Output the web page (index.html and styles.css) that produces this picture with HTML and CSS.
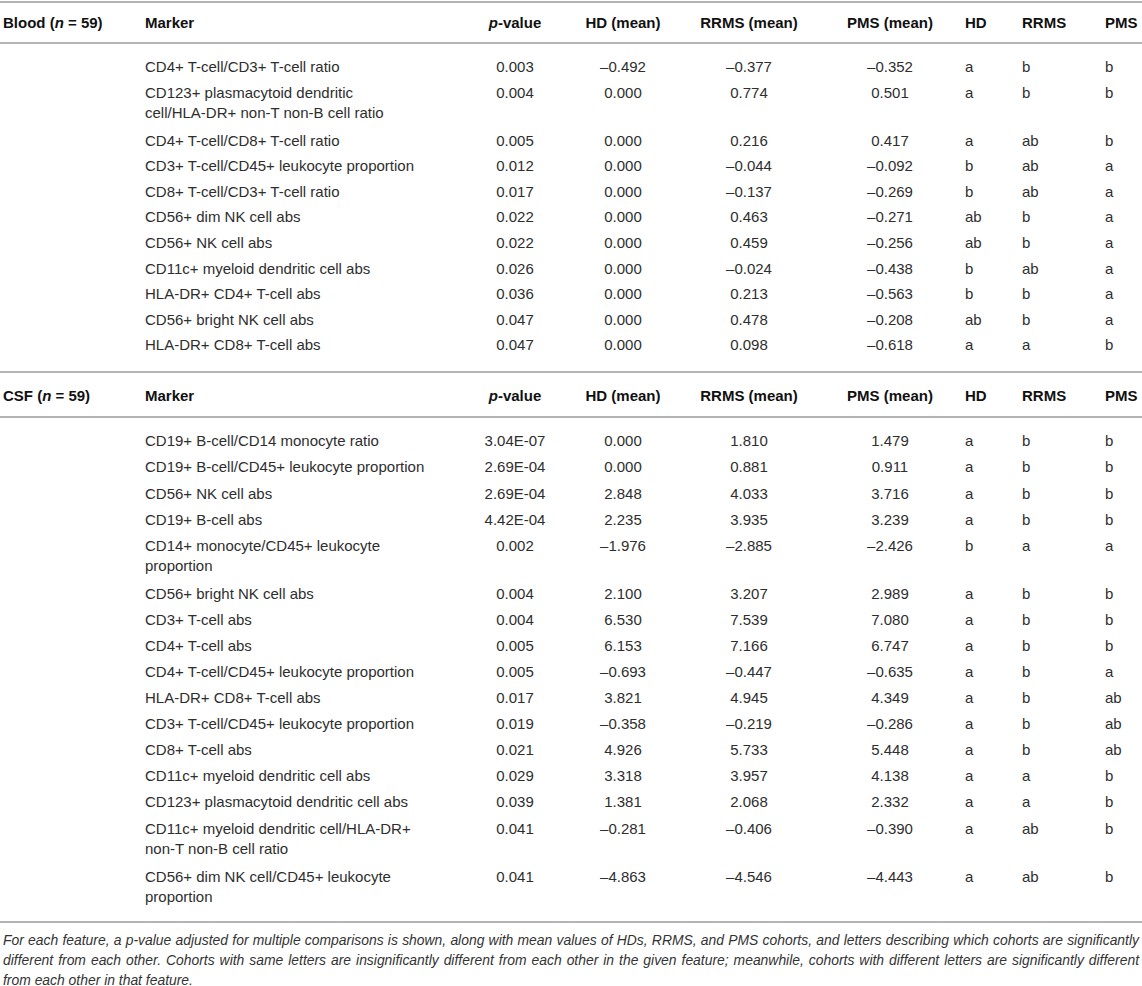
FILE: index.html
```html
<!DOCTYPE html>
<html>
<head>
    <meta charset="UTF-8">
    <title>Markers by cohort</title>
    <link rel="stylesheet" href="styles.css">
</head>
<body>
    <table class="markers">
        <colgroup>
            <col class="c-group">
            <col class="c-marker">
            <col class="c-p">
            <col class="c-hd">
            <col class="c-rrms">
            <col class="c-pms">
            <col class="c-l1">
            <col class="c-l2">
            <col class="c-l3">
        </colgroup>
        <tbody class="blood">
            <tr class="head">
                <td class="group">Blood (<i>n</i> = 59)</td>
                <td class="name">Marker</td>
                <td class="num"><i>p</i>-value</td>
                <td class="num">HD (mean)</td>
                <td class="num">RRMS (mean)</td>
                <td class="num">PMS (mean)</td>
                <td class="let">HD</td>
                <td class="let">RRMS</td>
                <td class="let">PMS</td>
            </tr>
            <tr class="first"><td></td><td class="name">CD4+ T-cell/CD3+ T-cell ratio</td><td class="num">0.003</td><td class="num">–0.492</td><td class="num">–0.377</td><td class="num">–0.352</td><td class="let">a</td><td class="let">b</td><td class="let">b</td></tr>
            <tr class="wrap"><td></td><td class="name">CD123+ plasmacytoid dendritic<br>cell/HLA-DR+ non-T non-B cell ratio</td><td class="num">0.004</td><td class="num">0.000</td><td class="num">0.774</td><td class="num">0.501</td><td class="let">a</td><td class="let">b</td><td class="let">b</td></tr>
            <tr><td></td><td class="name">CD4+ T-cell/CD8+ T-cell ratio</td><td class="num">0.005</td><td class="num">0.000</td><td class="num">0.216</td><td class="num">0.417</td><td class="let">a</td><td class="let">ab</td><td class="let">b</td></tr>
            <tr><td></td><td class="name">CD3+ T-cell/CD45+ leukocyte proportion</td><td class="num">0.012</td><td class="num">0.000</td><td class="num">–0.044</td><td class="num">–0.092</td><td class="let">b</td><td class="let">ab</td><td class="let">a</td></tr>
            <tr><td></td><td class="name">CD8+ T-cell/CD3+ T-cell ratio</td><td class="num">0.017</td><td class="num">0.000</td><td class="num">–0.137</td><td class="num">–0.269</td><td class="let">b</td><td class="let">ab</td><td class="let">a</td></tr>
            <tr><td></td><td class="name">CD56+ dim NK cell abs</td><td class="num">0.022</td><td class="num">0.000</td><td class="num">0.463</td><td class="num">–0.271</td><td class="let">ab</td><td class="let">b</td><td class="let">a</td></tr>
            <tr><td></td><td class="name">CD56+ NK cell abs</td><td class="num">0.022</td><td class="num">0.000</td><td class="num">0.459</td><td class="num">–0.256</td><td class="let">ab</td><td class="let">b</td><td class="let">a</td></tr>
            <tr><td></td><td class="name">CD11c+ myeloid dendritic cell abs</td><td class="num">0.026</td><td class="num">0.000</td><td class="num">–0.024</td><td class="num">–0.438</td><td class="let">b</td><td class="let">ab</td><td class="let">a</td></tr>
            <tr><td></td><td class="name">HLA-DR+ CD4+ T-cell abs</td><td class="num">0.036</td><td class="num">0.000</td><td class="num">0.213</td><td class="num">–0.563</td><td class="let">b</td><td class="let">b</td><td class="let">a</td></tr>
            <tr><td></td><td class="name">CD56+ bright NK cell abs</td><td class="num">0.047</td><td class="num">0.000</td><td class="num">0.478</td><td class="num">–0.208</td><td class="let">ab</td><td class="let">b</td><td class="let">a</td></tr>
            <tr class="last"><td></td><td class="name">HLA-DR+ CD8+ T-cell abs</td><td class="num">0.047</td><td class="num">0.000</td><td class="num">0.098</td><td class="num">–0.618</td><td class="let">a</td><td class="let">a</td><td class="let">b</td></tr>
        </tbody>
        <tbody class="csf">
            <tr class="head">
                <td class="group">CSF (<i>n</i> = 59)</td>
                <td class="name">Marker</td>
                <td class="num"><i>p</i>-value</td>
                <td class="num">HD (mean)</td>
                <td class="num">RRMS (mean)</td>
                <td class="num">PMS (mean)</td>
                <td class="let">HD</td>
                <td class="let">RRMS</td>
                <td class="let">PMS</td>
            </tr>
            <tr class="first"><td></td><td class="name">CD19+ B-cell/CD14 monocyte ratio</td><td class="num">3.04E-07</td><td class="num">0.000</td><td class="num">1.810</td><td class="num">1.479</td><td class="let">a</td><td class="let">b</td><td class="let">b</td></tr>
            <tr><td></td><td class="name">CD19+ B-cell/CD45+ leukocyte proportion</td><td class="num">2.69E-04</td><td class="num">0.000</td><td class="num">0.881</td><td class="num">0.911</td><td class="let">a</td><td class="let">b</td><td class="let">b</td></tr>
            <tr><td></td><td class="name">CD56+ NK cell abs</td><td class="num">2.69E-04</td><td class="num">2.848</td><td class="num">4.033</td><td class="num">3.716</td><td class="let">a</td><td class="let">b</td><td class="let">b</td></tr>
            <tr><td></td><td class="name">CD19+ B-cell abs</td><td class="num">4.42E-04</td><td class="num">2.235</td><td class="num">3.935</td><td class="num">3.239</td><td class="let">a</td><td class="let">b</td><td class="let">b</td></tr>
            <tr class="wrap"><td></td><td class="name">CD14+ monocyte/CD45+ leukocyte<br>proportion</td><td class="num">0.002</td><td class="num">–1.976</td><td class="num">–2.885</td><td class="num">–2.426</td><td class="let">b</td><td class="let">a</td><td class="let">a</td></tr>
            <tr><td></td><td class="name">CD56+ bright NK cell abs</td><td class="num">0.004</td><td class="num">2.100</td><td class="num">3.207</td><td class="num">2.989</td><td class="let">a</td><td class="let">b</td><td class="let">b</td></tr>
            <tr><td></td><td class="name">CD3+ T-cell abs</td><td class="num">0.004</td><td class="num">6.530</td><td class="num">7.539</td><td class="num">7.080</td><td class="let">a</td><td class="let">b</td><td class="let">b</td></tr>
            <tr><td></td><td class="name">CD4+ T-cell abs</td><td class="num">0.005</td><td class="num">6.153</td><td class="num">7.166</td><td class="num">6.747</td><td class="let">a</td><td class="let">b</td><td class="let">b</td></tr>
            <tr><td></td><td class="name">CD4+ T-cell/CD45+ leukocyte proportion</td><td class="num">0.005</td><td class="num">–0.693</td><td class="num">–0.447</td><td class="num">–0.635</td><td class="let">a</td><td class="let">b</td><td class="let">a</td></tr>
            <tr><td></td><td class="name">HLA-DR+ CD8+ T-cell abs</td><td class="num">0.017</td><td class="num">3.821</td><td class="num">4.945</td><td class="num">4.349</td><td class="let">a</td><td class="let">b</td><td class="let">ab</td></tr>
            <tr><td></td><td class="name">CD3+ T-cell/CD45+ leukocyte proportion</td><td class="num">0.019</td><td class="num">–0.358</td><td class="num">–0.219</td><td class="num">–0.286</td><td class="let">a</td><td class="let">b</td><td class="let">ab</td></tr>
            <tr><td></td><td class="name">CD8+ T-cell abs</td><td class="num">0.021</td><td class="num">4.926</td><td class="num">5.733</td><td class="num">5.448</td><td class="let">a</td><td class="let">b</td><td class="let">ab</td></tr>
            <tr><td></td><td class="name">CD11c+ myeloid dendritic cell abs</td><td class="num">0.029</td><td class="num">3.318</td><td class="num">3.957</td><td class="num">4.138</td><td class="let">a</td><td class="let">a</td><td class="let">b</td></tr>
            <tr><td></td><td class="name">CD123+ plasmacytoid dendritic cell abs</td><td class="num">0.039</td><td class="num">1.381</td><td class="num">2.068</td><td class="num">2.332</td><td class="let">a</td><td class="let">a</td><td class="let">b</td></tr>
            <tr class="wrap"><td></td><td class="name">CD11c+ myeloid dendritic cell/HLA-DR+<br>non-T non-B cell ratio</td><td class="num">0.041</td><td class="num">–0.281</td><td class="num">–0.406</td><td class="num">–0.390</td><td class="let">a</td><td class="let">ab</td><td class="let">b</td></tr>
            <tr class="last"><td></td><td class="name">CD56+ dim NK cell/CD45+ leukocyte<br>proportion</td><td class="num">0.041</td><td class="num">–4.863</td><td class="num">–4.546</td><td class="num">–4.443</td><td class="let">a</td><td class="let">ab</td><td class="let">b</td></tr>
        </tbody>
    </table>

    <div class="note">
        <span class="line">For each feature, a <i>p</i>-value adjusted for multiple comparisons is shown, along with mean values of HDs, RRMS, and PMS cohorts, and letters describing which cohorts are significantly</span>
        <span class="line">different from each other. Cohorts with same letters are insignificantly different from each other in the given feature; meanwhile, cohorts with different letters are significantly different</span>
        <span class="line end">from each other in that feature.</span>
    </div>
</body>
</html>
```

FILE: styles.css
```css
body {
    margin: 0;
    padding: 0;
    background-color: #fff;
    color: #2e2e2e;
    font-family: "Liberation Sans", Arial, sans-serif;
    font-size: 15px;
}
.markers {
    width: 1142px;
    margin-top: 1px;
    border-collapse: collapse;
    table-layout: fixed;
}
.c-group { width: 142px; }
.c-marker { width: 319px; }
.c-p { width: 108px; }
.c-hd { width: 108px; }
.c-rrms { width: 144px; }
.c-pms { width: 138px; }
.c-l1 { width: 57px; }
.c-l2 { width: 83px; }
.c-l3 { width: 43px; }
.markers td {
    padding: 3px 0 3.1px;
    line-height: 20px;
    vertical-align: top;
    white-space: nowrap;
}
.blood td {
    padding-bottom: 2.6px;
}
.markers .head td {
    padding: 10px 0 9px;
    border-top: 2px solid #b4b4b4;
    border-bottom: 2px solid #b4b4b4;
    font-weight: bold;
    color: #111;
}
.csf .head td {
    padding: 13px 0 10px;
}
.markers .first td {
    padding-top: 13px;
}
.markers .wrap td {
    padding-bottom: 5px;
}
.blood .last td {
    padding-bottom: 16px;
}
.csf .last td {
    padding-bottom: 14px;
    border-bottom: 2px solid #b4b4b4;
}
.group,
.name {
    padding-left: 3px !important;
    text-align: left;
}
.num {
    text-align: center;
}
.let {
    padding-left: 6px !important;
    text-align: left;
}
.note {
    padding: 7px 3px 0 3px;
    font-size: 13.9px;
    font-style: italic;
    line-height: 20px;
    color: #333;
}
.note .line {
    display: block;
    text-align: justify;
    text-align-last: justify;
    white-space: nowrap;
}
.note .end {
    text-align-last: left;
}
```
